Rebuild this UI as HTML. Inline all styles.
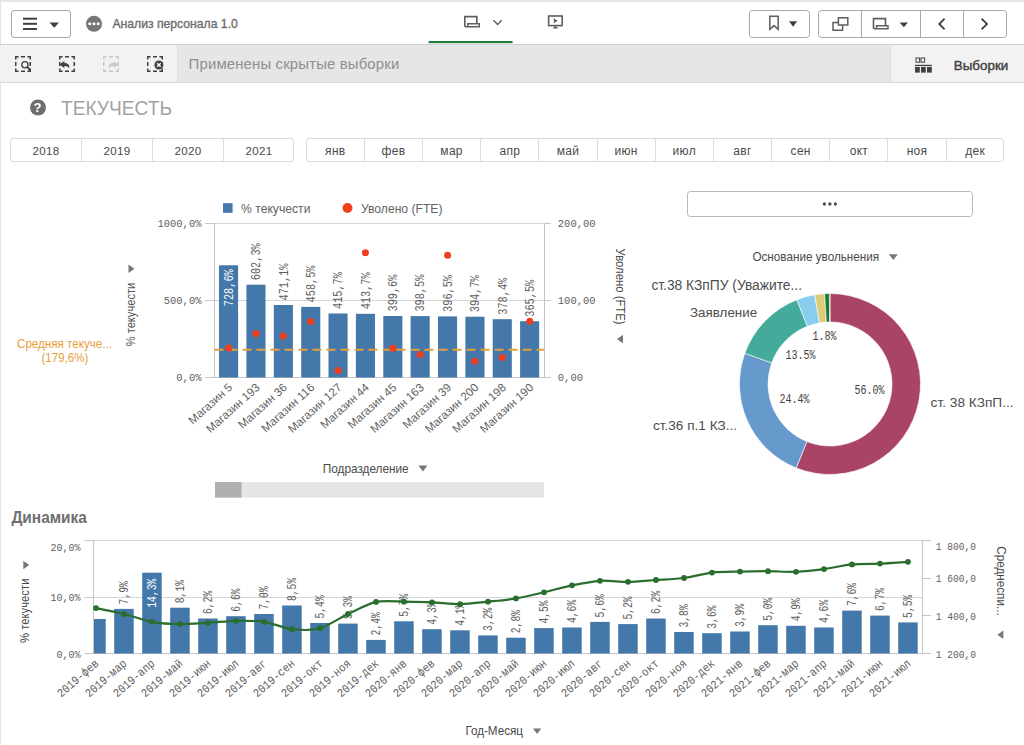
<!DOCTYPE html><html><head><meta charset="utf-8"><style>
*{margin:0;padding:0;box-sizing:border-box}
html,body{width:1024px;height:745px;overflow:hidden;background:#fff;font-family:"Liberation Sans", sans-serif;position:relative}
.abs{position:absolute}
.t{position:absolute;white-space:nowrap;line-height:1}

</style></head><body>
<div class="abs" style="left:0;top:0;width:1024px;height:2px;background:#e6e6e6"></div>
<div class="abs" style="left:0;top:0;width:1px;height:745px;background:#e3e3e3"></div>
<div class="abs" style="left:0;top:44px;width:1024px;height:1px;background:#d2d2d2"></div>
<div class="abs" style="left:0;top:45px;width:1024px;height:37px;background:#f2f2f2"></div>
<div class="abs" style="left:177px;top:45px;width:714px;height:37px;background:#e6e6e6;border-left:1px solid #dedede;border-right:1px solid #dedede"></div>
<div class="abs" style="left:0;top:82px;width:1024px;height:1px;background:#d9d9d9"></div>
<div class="abs" style="left:11px;top:10px;width:60px;height:28px;border:1px solid #a8a8a8;border-radius:3px"></div>
<svg class="abs" style="left:0;top:0" width="1024" height="745" viewBox="0 0 1024 745"><rect x="23" y="17.7" width="14" height="2" fill="#404040"/><rect x="23" y="22.8" width="14" height="2" fill="#404040"/><rect x="23" y="28" width="14" height="2" fill="#404040"/><path d="M49.5 22.4 L59 22.4 L54.25 27.8 Z" fill="#404040"/><circle cx="94" cy="23.8" r="8" fill="#757575"/><circle cx="89.8" cy="23.8" r="1.5" fill="#fff"/><circle cx="94" cy="23.8" r="1.5" fill="#fff"/><circle cx="98.2" cy="23.8" r="1.5" fill="#fff"/><path d="M464.8 26.799999999999997 L464.8 16.6 L476.8 16.6 L476.8 23.799999999999997" fill="none" stroke="#5e5e5e" stroke-width="1.6"/><path d="M464.8 26.799999999999997 L467.8 26.799999999999997 L467.8 23.799999999999997 L479.3 23.799999999999997 L479.3 26.799999999999997 Z" fill="none" stroke="#5e5e5e" stroke-width="1.4"/><path d="M493.5 20.2 L497.6 24.4 L501.7 20.2" fill="none" stroke="#5e5e5e" stroke-width="1.5"/><rect x="548.6" y="16" width="13.6" height="9.6" fill="none" stroke="#5e5e5e" stroke-width="1.6"/><path d="M553.8 18.3 L557.6 20.8 L553.8 23.3 Z" fill="#5e5e5e"/><path d="M555.4 25.8 L552.6 28.4 L558.2 28.4 Z" fill="#5e5e5e"/><rect x="428.6" y="41" width="84" height="2.2" fill="#1f7d3f"/><rect x="749.5" y="10.5" width="60" height="27" rx="3" fill="none" stroke="#a8a8a8" stroke-width="1"/><path d="M769.8 29.4 L769.8 16.2 L778.2 16.2 L778.2 29.4 L774 25.6 Z" fill="none" stroke="#5e5e5e" stroke-width="1.5" stroke-linejoin="miter"/><path d="M789 21.2 L797.2 21.2 L793.1 26.7 Z" fill="#404040"/><rect x="818.5" y="10.5" width="188" height="27" rx="3" fill="none" stroke="#a8a8a8" stroke-width="1"/><line x1="861.5" y1="10.5" x2="861.5" y2="37.5" stroke="#a8a8a8" stroke-width="1"/><line x1="920.5" y1="10.5" x2="920.5" y2="37.5" stroke="#a8a8a8" stroke-width="1"/><line x1="963.5" y1="10.5" x2="963.5" y2="37.5" stroke="#a8a8a8" stroke-width="1"/><rect x="838.4" y="17.8" width="9.4" height="7.2" fill="none" stroke="#5e5e5e" stroke-width="1.5"/><path d="M838.4 22.4 L833 22.4 L833 30.2 L842.6 30.2 L842.6 25" fill="none" stroke="#5e5e5e" stroke-width="1.5"/><path d="M873.5 28.8 L873.5 18.6 L885.5 18.6 L885.5 25.8" fill="none" stroke="#5e5e5e" stroke-width="1.6"/><path d="M873.5 28.8 L876.5 28.8 L876.5 25.8 L888.0 25.8 L888.0 28.8 Z" fill="none" stroke="#5e5e5e" stroke-width="1.4"/><path d="M899.7 22.4 L908 22.4 L903.85 27.2 Z" fill="#404040"/><path d="M944.6 18.6 L939.2 24 L944.6 29.4" fill="none" stroke="#404040" stroke-width="1.8"/><path d="M981.6 18.6 L987 24 L981.6 29.4" fill="none" stroke="#404040" stroke-width="1.8"/><path d="M15.75 59.6 V56.75 H18.6 M27.4 56.75 H30.25 V59.6 M30.25 68.4 V71.25 H27.4 M18.6 71.25 H15.75 V68.4 M21 56.75 H25 M21 71.25 H25 M15.75 62 V66 M30.25 62 V66" fill="none" stroke="#404040" stroke-width="1.5"/><circle cx="24.9" cy="64.7" r="3.1" fill="none" stroke="#404040" stroke-width="1.3"/><path d="M27.2 67 L30.4 70.3" stroke="#404040" stroke-width="1.9"/><path d="M59.75 59.6 V56.75 H62.6 M71.4 56.75 H74.25 V59.6 M74.25 68.4 V71.25 H71.4 M62.6 71.25 H59.75 V68.4 M65 56.75 H69 M65 71.25 H69 M59.75 62 V66 M74.25 62 V66" fill="none" stroke="#404040" stroke-width="1.5"/><path d="M59.4 64.4 L64.4 60.9 L64.4 62.9 C67.6 62.9 69.8 64.6 69.2 68.2 C68 66.6 66.6 66 64.4 66 L64.4 67.9 Z" fill="#404040"/><path d="M103.75 59.6 V56.75 H106.6 M115.4 56.75 H118.25 V59.6 M118.25 68.4 V71.25 H115.4 M106.6 71.25 H103.75 V68.4 M109 56.75 H113 M109 71.25 H113 M103.75 62 V66 M118.25 62 V66" fill="none" stroke="#c8c8c8" stroke-width="1.5"/><path d="M118.6 64.4 L113.6 60.9 L113.6 62.9 C110.4 62.9 108.2 64.6 108.8 68.2 C110 66.6 111.4 66 113.6 66 L113.6 67.9 Z" fill="#c8c8c8"/><path d="M147.75 59.6 V56.75 H150.6 M159.4 56.75 H162.25 V59.6 M162.25 68.4 V71.25 H159.4 M150.6 71.25 H147.75 V68.4 M153 56.75 H157 M153 71.25 H157 M147.75 62 V66 M162.25 62 V66" fill="none" stroke="#404040" stroke-width="1.5"/><circle cx="158.9" cy="65" r="4.5" fill="#404040"/><path d="M157.1 63.2 L160.7 66.8 M160.7 63.2 L157.1 66.8" stroke="#fff" stroke-width="1.3"/><rect x="916.0" y="58" width="3.6" height="4.2" fill="none" stroke="#404040" stroke-width="1"/><rect x="921.0" y="58" width="3.6" height="4.2" fill="none" stroke="#404040" stroke-width="1"/><rect x="915" y="64.8" width="16.8" height="1.3" fill="#404040"/><rect x="915" y="67" width="4.8" height="5.6" fill="#404040"/><rect x="921" y="67" width="4.8" height="5.6" fill="#404040"/><rect x="927" y="67" width="4.8" height="5.6" fill="#404040"/><circle cx="38" cy="107.5" r="8" fill="#6e6e6e"/></svg>
<div class="t" style="left:112.4px;top:18.4px;font-size:12.2px;color:#6e6e6e;-webkit-text-stroke:0.35px #6e6e6e">Анализ персонала 1.0</div>
<div class="t" style="left:188.6px;top:56.7px;font-size:14.9px;letter-spacing:0.16px;color:#8f8f8f">Применены скрытые выборки</div>
<div class="t" style="left:953.8px;top:58.6px;font-size:13.4px;color:#404040;-webkit-text-stroke:0.4px #404040">Выборки</div>
<div class="t" style="left:33.5px;top:100.5px;font-size:13px;font-weight:700;color:#fff">?</div>
<div class="t" style="left:61.2px;top:97.2px;font-size:21px;transform:scaleX(0.912);transform-origin:0 0;color:#a3a3a3">ТЕКУЧЕСТЬ</div>
<div class="abs" style="left:10px;top:138px;width:284px;height:24px;border:1px solid #dcdcdc;border-radius:3px"></div>
<div class="t" style="left:10.5px;width:71.0px;top:144.6px;text-align:center;font-size:11.6px;letter-spacing:0.3px;color:#4a4a4a">2018</div>
<div class="abs" style="left:81.0px;top:138px;width:1px;height:23.5px;background:#dcdcdc"></div>
<div class="t" style="left:81.5px;width:71.0px;top:144.6px;text-align:center;font-size:11.6px;letter-spacing:0.3px;color:#4a4a4a">2019</div>
<div class="abs" style="left:152.0px;top:138px;width:1px;height:23.5px;background:#dcdcdc"></div>
<div class="t" style="left:152.5px;width:71.0px;top:144.6px;text-align:center;font-size:11.6px;letter-spacing:0.3px;color:#4a4a4a">2020</div>
<div class="abs" style="left:223.0px;top:138px;width:1px;height:23.5px;background:#dcdcdc"></div>
<div class="t" style="left:223.5px;width:71.0px;top:144.6px;text-align:center;font-size:11.6px;letter-spacing:0.3px;color:#4a4a4a">2021</div>
<div class="abs" style="left:306px;top:138px;width:698px;height:24px;border:1px solid #dcdcdc;border-radius:3px"></div>
<div class="t" style="left:306.2px;width:58.2px;top:145.4px;text-align:center;font-size:12px;letter-spacing:0.3px;color:#4a4a4a">янв</div>
<div class="abs" style="left:363.9px;top:138px;width:1px;height:23.5px;background:#dcdcdc"></div>
<div class="t" style="left:364.4px;width:58.2px;top:145.4px;text-align:center;font-size:12px;letter-spacing:0.3px;color:#4a4a4a">фев</div>
<div class="abs" style="left:422.0px;top:138px;width:1px;height:23.5px;background:#dcdcdc"></div>
<div class="t" style="left:422.5px;width:58.2px;top:145.4px;text-align:center;font-size:12px;letter-spacing:0.3px;color:#4a4a4a">мар</div>
<div class="abs" style="left:480.2px;top:138px;width:1px;height:23.5px;background:#dcdcdc"></div>
<div class="t" style="left:480.7px;width:58.2px;top:145.4px;text-align:center;font-size:12px;letter-spacing:0.3px;color:#4a4a4a">апр</div>
<div class="abs" style="left:538.4px;top:138px;width:1px;height:23.5px;background:#dcdcdc"></div>
<div class="t" style="left:538.9px;width:58.2px;top:145.4px;text-align:center;font-size:12px;letter-spacing:0.3px;color:#4a4a4a">май</div>
<div class="abs" style="left:596.6px;top:138px;width:1px;height:23.5px;background:#dcdcdc"></div>
<div class="t" style="left:597.1px;width:58.2px;top:145.4px;text-align:center;font-size:12px;letter-spacing:0.3px;color:#4a4a4a">июн</div>
<div class="abs" style="left:654.8px;top:138px;width:1px;height:23.5px;background:#dcdcdc"></div>
<div class="t" style="left:655.2px;width:58.2px;top:145.4px;text-align:center;font-size:12px;letter-spacing:0.3px;color:#4a4a4a">июл</div>
<div class="abs" style="left:712.9px;top:138px;width:1px;height:23.5px;background:#dcdcdc"></div>
<div class="t" style="left:713.4px;width:58.2px;top:145.4px;text-align:center;font-size:12px;letter-spacing:0.3px;color:#4a4a4a">авг</div>
<div class="abs" style="left:771.1px;top:138px;width:1px;height:23.5px;background:#dcdcdc"></div>
<div class="t" style="left:771.6px;width:58.2px;top:145.4px;text-align:center;font-size:12px;letter-spacing:0.3px;color:#4a4a4a">сен</div>
<div class="abs" style="left:829.3px;top:138px;width:1px;height:23.5px;background:#dcdcdc"></div>
<div class="t" style="left:829.8px;width:58.2px;top:145.4px;text-align:center;font-size:12px;letter-spacing:0.3px;color:#4a4a4a">окт</div>
<div class="abs" style="left:887.4px;top:138px;width:1px;height:23.5px;background:#dcdcdc"></div>
<div class="t" style="left:887.9px;width:58.2px;top:145.4px;text-align:center;font-size:12px;letter-spacing:0.3px;color:#4a4a4a">ноя</div>
<div class="abs" style="left:945.6px;top:138px;width:1px;height:23.5px;background:#dcdcdc"></div>
<div class="t" style="left:946.1px;width:58.2px;top:145.4px;text-align:center;font-size:12px;letter-spacing:0.3px;color:#4a4a4a">дек</div>
<svg class="abs" style="left:0;top:0" width="1024" height="745" viewBox="0 0 1024 745"><line x1="214.5" y1="223.5" x2="544.5" y2="223.5" stroke="#d6d6d6" stroke-width="1"/><line x1="205" y1="223.5" x2="214.5" y2="223.5" stroke="#c6c6c6" stroke-width="1"/><line x1="544.5" y1="223.5" x2="551" y2="223.5" stroke="#c6c6c6" stroke-width="1"/><line x1="214.5" y1="300.5" x2="544.5" y2="300.5" stroke="#d6d6d6" stroke-width="1"/><line x1="205" y1="300.5" x2="214.5" y2="300.5" stroke="#c6c6c6" stroke-width="1"/><line x1="544.5" y1="300.5" x2="551" y2="300.5" stroke="#c6c6c6" stroke-width="1"/><line x1="205" y1="377.5" x2="551" y2="377.5" stroke="#c6c6c6" stroke-width="1"/><line x1="214.5" y1="223.5" x2="214.5" y2="377.5" stroke="#c6c6c6" stroke-width="1"/><line x1="544.5" y1="223.5" x2="544.5" y2="377.5" stroke="#c6c6c6" stroke-width="1"/><rect x="219.0" y="265.3" width="19.1" height="112.2" fill="#4477aa"/><rect x="246.4" y="284.7" width="19.1" height="92.8" fill="#4477aa"/><rect x="273.8" y="305.0" width="19.1" height="72.5" fill="#4477aa"/><rect x="301.2" y="306.9" width="19.1" height="70.6" fill="#4477aa"/><rect x="328.5" y="313.5" width="19.1" height="64.0" fill="#4477aa"/><rect x="355.9" y="313.8" width="19.1" height="63.7" fill="#4477aa"/><rect x="383.3" y="316.0" width="19.1" height="61.5" fill="#4477aa"/><rect x="410.6" y="316.1" width="19.1" height="61.4" fill="#4477aa"/><rect x="438.0" y="316.4" width="19.1" height="61.1" fill="#4477aa"/><rect x="465.4" y="316.7" width="19.1" height="60.8" fill="#4477aa"/><rect x="492.7" y="319.2" width="19.1" height="58.3" fill="#4477aa"/><rect x="520.1" y="321.2" width="19.1" height="56.3" fill="#4477aa"/><line x1="214.5" y1="349.8" x2="544.5" y2="349.8" stroke="#e3a03a" stroke-width="2" stroke-dasharray="9 5"/><text transform="translate(232.8,269.3) rotate(-90)" text-anchor="end" font-family="Liberation Mono" font-size="12.9" textLength="36.9" lengthAdjust="spacingAndGlyphs" fill="#ffffff" >728,6%</text><text transform="translate(260.2,280.2) rotate(-90)" text-anchor="start" font-family="Liberation Mono" font-size="12.9" textLength="36.9" lengthAdjust="spacingAndGlyphs" fill="#5e5e5e" >602,3%</text><text transform="translate(287.5,300.5) rotate(-90)" text-anchor="start" font-family="Liberation Mono" font-size="12.9" textLength="36.9" lengthAdjust="spacingAndGlyphs" fill="#5e5e5e" >471,1%</text><text transform="translate(314.9,302.4) rotate(-90)" text-anchor="start" font-family="Liberation Mono" font-size="12.9" textLength="36.9" lengthAdjust="spacingAndGlyphs" fill="#5e5e5e" >458,5%</text><text transform="translate(342.3,309.0) rotate(-90)" text-anchor="start" font-family="Liberation Mono" font-size="12.9" textLength="36.9" lengthAdjust="spacingAndGlyphs" fill="#5e5e5e" >415,7%</text><text transform="translate(369.6,309.3) rotate(-90)" text-anchor="start" font-family="Liberation Mono" font-size="12.9" textLength="36.9" lengthAdjust="spacingAndGlyphs" fill="#5e5e5e" >413,7%</text><text transform="translate(397.0,311.5) rotate(-90)" text-anchor="start" font-family="Liberation Mono" font-size="12.9" textLength="36.9" lengthAdjust="spacingAndGlyphs" fill="#5e5e5e" >399,6%</text><text transform="translate(424.4,311.6) rotate(-90)" text-anchor="start" font-family="Liberation Mono" font-size="12.9" textLength="36.9" lengthAdjust="spacingAndGlyphs" fill="#5e5e5e" >398,5%</text><text transform="translate(451.8,311.9) rotate(-90)" text-anchor="start" font-family="Liberation Mono" font-size="12.9" textLength="36.9" lengthAdjust="spacingAndGlyphs" fill="#5e5e5e" >396,5%</text><text transform="translate(479.1,312.2) rotate(-90)" text-anchor="start" font-family="Liberation Mono" font-size="12.9" textLength="36.9" lengthAdjust="spacingAndGlyphs" fill="#5e5e5e" >394,7%</text><text transform="translate(506.5,314.7) rotate(-90)" text-anchor="start" font-family="Liberation Mono" font-size="12.9" textLength="36.9" lengthAdjust="spacingAndGlyphs" fill="#5e5e5e" >378,4%</text><text transform="translate(533.9,316.7) rotate(-90)" text-anchor="start" font-family="Liberation Mono" font-size="12.9" textLength="36.9" lengthAdjust="spacingAndGlyphs" fill="#5e5e5e" >365,5%</text><circle cx="228.6" cy="348.0" r="3.5" fill="#ef3f1e"/><circle cx="256.0" cy="333.6" r="3.5" fill="#ef3f1e"/><circle cx="283.3" cy="335.9" r="3.5" fill="#ef3f1e"/><circle cx="310.7" cy="321.6" r="3.5" fill="#ef3f1e"/><circle cx="338.1" cy="370.6" r="3.5" fill="#ef3f1e"/><circle cx="365.4" cy="252.8" r="3.5" fill="#ef3f1e"/><circle cx="392.8" cy="348.2" r="3.5" fill="#ef3f1e"/><circle cx="420.2" cy="354.4" r="3.5" fill="#ef3f1e"/><circle cx="447.6" cy="255.3" r="3.5" fill="#ef3f1e"/><circle cx="474.9" cy="361.3" r="3.5" fill="#ef3f1e"/><circle cx="502.3" cy="357.5" r="3.5" fill="#ef3f1e"/><circle cx="529.7" cy="321.3" r="3.5" fill="#ef3f1e"/><text x="201.5" y="226.5" text-anchor="end" font-family="Liberation Mono" font-size="11.6" textLength="44.1" lengthAdjust="spacingAndGlyphs" fill="#5e5e5e" >1000,0%</text><text x="201.5" y="303.5" text-anchor="end" font-family="Liberation Mono" font-size="11.6" textLength="37.8" lengthAdjust="spacingAndGlyphs" fill="#5e5e5e" >500,0%</text><text x="201.5" y="380.5" text-anchor="end" font-family="Liberation Mono" font-size="11.6" textLength="25.2" lengthAdjust="spacingAndGlyphs" fill="#5e5e5e" >0,0%</text><text x="557.8" y="226.5" text-anchor="start" font-family="Liberation Mono" font-size="11.6" textLength="37.8" lengthAdjust="spacingAndGlyphs" fill="#5e5e5e" >200,00</text><text x="557.8" y="303.5" text-anchor="start" font-family="Liberation Mono" font-size="11.6" textLength="37.8" lengthAdjust="spacingAndGlyphs" fill="#5e5e5e" >100,00</text><text x="557.8" y="380.5" text-anchor="start" font-family="Liberation Mono" font-size="11.6" textLength="25.2" lengthAdjust="spacingAndGlyphs" fill="#5e5e5e" >0,00</text><text transform="translate(233.1,388.5) rotate(-42)" text-anchor="end" font-family='Liberation Sans' font-size="11.6" fill="#5e5e5e">Магазин 5</text><text transform="translate(260.5,388.5) rotate(-42)" text-anchor="end" font-family='Liberation Sans' font-size="11.6" fill="#5e5e5e">Магазин 193</text><text transform="translate(287.8,388.5) rotate(-42)" text-anchor="end" font-family='Liberation Sans' font-size="11.6" fill="#5e5e5e">Магазин 36</text><text transform="translate(315.2,388.5) rotate(-42)" text-anchor="end" font-family='Liberation Sans' font-size="11.6" fill="#5e5e5e">Магазин 116</text><text transform="translate(342.6,388.5) rotate(-42)" text-anchor="end" font-family='Liberation Sans' font-size="11.6" fill="#5e5e5e">Магазин 127</text><text transform="translate(369.9,388.5) rotate(-42)" text-anchor="end" font-family='Liberation Sans' font-size="11.6" fill="#5e5e5e">Магазин 44</text><text transform="translate(397.3,388.5) rotate(-42)" text-anchor="end" font-family='Liberation Sans' font-size="11.6" fill="#5e5e5e">Магазин 45</text><text transform="translate(424.7,388.5) rotate(-42)" text-anchor="end" font-family='Liberation Sans' font-size="11.6" fill="#5e5e5e">Магазин 163</text><text transform="translate(452.1,388.5) rotate(-42)" text-anchor="end" font-family='Liberation Sans' font-size="11.6" fill="#5e5e5e">Магазин 39</text><text transform="translate(479.4,388.5) rotate(-42)" text-anchor="end" font-family='Liberation Sans' font-size="11.6" fill="#5e5e5e">Магазин 200</text><text transform="translate(506.8,388.5) rotate(-42)" text-anchor="end" font-family='Liberation Sans' font-size="11.6" fill="#5e5e5e">Магазин 198</text><text transform="translate(534.2,388.5) rotate(-42)" text-anchor="end" font-family='Liberation Sans' font-size="11.6" fill="#5e5e5e">Магазин 190</text><rect x="223" y="203.2" width="9.6" height="9.6" fill="#4477aa"/><text x="241" y="212.6" font-family='Liberation Sans' font-size="12.6" textLength="69.5" lengthAdjust="spacingAndGlyphs" fill="#626262">% текучести</text><circle cx="347.5" cy="208" r="5" fill="#ef3f1e"/><text x="361" y="212.6" font-family='Liberation Sans' font-size="12.6" textLength="81.5" lengthAdjust="spacingAndGlyphs" fill="#626262">Уволено (FTE)</text><text transform="translate(134.8,314.5) rotate(-90)" text-anchor="middle" font-family='Liberation Sans' font-size="12" textLength="63.5" lengthAdjust="spacingAndGlyphs" fill="#555">% текучести</text><path d="M128.5 264.5 L134.5 268.8 L128.5 273.1 Z" fill="#777"/><text transform="translate(615.8,286.6) rotate(90)" text-anchor="middle" font-family='Liberation Sans' font-size="12.2" textLength="76" lengthAdjust="spacingAndGlyphs" fill="#4a4a4a">Уволено (FTE)</text><path d="M623 334.7 L617 339 L623 343.3 Z" fill="#777"/><text x="64.5" y="348" text-anchor="middle" font-family='Liberation Sans' font-size="12.4" textLength="95" lengthAdjust="spacingAndGlyphs" fill="#e6a03a">Средняя текуче...</text><text x="64.9" y="362" text-anchor="middle" font-family='Liberation Sans' font-size="12.4" textLength="47" lengthAdjust="spacingAndGlyphs" fill="#e6a03a">(179,6%)</text><text x="322.8" y="472.8" font-family='Liberation Sans' font-size="12.8" textLength="85.8" lengthAdjust="spacingAndGlyphs" fill="#4a4a4a">Подразделение</text><path d="M418.4 465.6 L427.4 465.6 L422.9 471.4 Z" fill="#777"/><rect x="215" y="482" width="329" height="15.6" fill="#e6e6e6"/><rect x="215" y="482" width="26.6" height="15.6" fill="#b0b0b0"/><path d="M830.00 293.50 A90.5 90.5 0 1 1 796.24 467.97 L806.87 441.52 A62 62 0 1 0 830.00 322.00 Z" fill="#aa4466" stroke="#fff" stroke-width="0.6"/><path d="M796.24 467.97 A90.5 90.5 0 0 1 744.89 353.23 L771.69 362.92 A62 62 0 0 0 806.87 441.52 Z" fill="#6699cc" stroke="#fff" stroke-width="0.6"/><path d="M744.89 353.23 A90.5 90.5 0 0 1 796.90 299.77 L807.33 326.30 A62 62 0 0 0 771.69 362.92 Z" fill="#44aa99" stroke="#fff" stroke-width="0.6"/><path d="M796.90 299.77 A90.5 90.5 0 0 1 814.70 294.80 L819.52 322.89 A62 62 0 0 0 807.33 326.30 Z" fill="#88ccee" stroke="#fff" stroke-width="0.6"/><path d="M814.70 294.80 A90.5 90.5 0 0 1 824.59 293.66 L826.30 322.11 A62 62 0 0 0 819.52 322.89 Z" fill="#ddcc77" stroke="#fff" stroke-width="0.6"/><path d="M824.59 293.66 A90.5 90.5 0 0 1 829.43 293.50 L829.61 322.00 A62 62 0 0 0 826.30 322.11 Z" fill="#1c7a33" stroke="#fff" stroke-width="0.6"/><path d="M829.43 293.50 A90.5 90.5 0 0 1 830.00 293.50 L830.00 322.00 A62 62 0 0 0 829.61 322.00 Z" fill="#333" stroke="#fff" stroke-width="0.6"/><text x="869.5" y="394.3" text-anchor="middle" font-family="Liberation Mono" font-size="12" textLength="30" lengthAdjust="spacingAndGlyphs" fill="#404040">56.0%</text><text x="794.6" y="402.5" text-anchor="middle" font-family="Liberation Mono" font-size="12" textLength="30" lengthAdjust="spacingAndGlyphs" fill="#404040">24.4%</text><text x="800.5" y="359" text-anchor="middle" font-family="Liberation Mono" font-size="12" textLength="30" lengthAdjust="spacingAndGlyphs" fill="#404040">13.5%</text><text x="824.5" y="340" text-anchor="middle" font-family="Liberation Mono" font-size="12" textLength="24" lengthAdjust="spacingAndGlyphs" fill="#404040">1.8%</text><text x="651.4" y="289.5" font-family='Liberation Sans' font-size="13.8" fill="#4d4d4d">ст.38 КЗпПУ (Уважите...</text><text x="690" y="316.8" font-family='Liberation Sans' font-size="13.4" fill="#4d4d4d">Заявление</text><text x="930.6" y="407" font-family='Liberation Sans' font-size="13.7" fill="#4d4d4d">ст. 38 КЗпП...</text><text x="653" y="430.2" font-family='Liberation Sans' font-size="13.6" fill="#4d4d4d">ст.36 п.1 КЗ...</text><text x="752.4" y="261.4" font-family='Liberation Sans' font-size="12.8" textLength="126.8" lengthAdjust="spacingAndGlyphs" fill="#4a4a4a">Основание увольнения</text><path d="M888.8 254.2 L897.8 254.2 L893.3 260 Z" fill="#777"/><rect x="687.5" y="191.5" width="285" height="25" rx="3" fill="#fff" stroke="#b8b8b8" stroke-width="1"/><circle cx="824.4" cy="204" r="1.65" fill="#4f4f4f"/><circle cx="829.9" cy="204" r="1.65" fill="#4f4f4f"/><circle cx="835.4" cy="204" r="1.65" fill="#4f4f4f"/><text x="11.4" y="522.8" font-family='Liberation Sans' font-size="16.4" font-weight="700" textLength="75.5" lengthAdjust="spacingAndGlyphs" fill="#6e6e6e">Динамика</text><line x1="93.5" y1="540.5" x2="922.5" y2="540.5" stroke="#d6d6d6" stroke-width="1"/><line x1="84.5" y1="540.5" x2="93.5" y2="540.5" stroke="#c6c6c6" stroke-width="1"/><line x1="93.5" y1="597.5" x2="922.5" y2="597.5" stroke="#d6d6d6" stroke-width="1"/><line x1="84.5" y1="597.5" x2="93.5" y2="597.5" stroke="#c6c6c6" stroke-width="1"/><line x1="84.5" y1="653.5" x2="931" y2="653.5" stroke="#c6c6c6" stroke-width="1"/><line x1="93.5" y1="540.5" x2="93.5" y2="653.5" stroke="#c6c6c6" stroke-width="1"/><line x1="922.5" y1="540.5" x2="922.5" y2="653.5" stroke="#c6c6c6" stroke-width="1"/><line x1="922.5" y1="540.5" x2="931" y2="540.5" stroke="#c6c6c6" stroke-width="1"/><text x="935.7" y="550.1" text-anchor="start" font-family="Liberation Mono" font-size="11.2" textLength="40.3" lengthAdjust="spacingAndGlyphs" fill="#5e5e5e" >1 800,0</text><line x1="922.5" y1="578.5" x2="931" y2="578.5" stroke="#c6c6c6" stroke-width="1"/><text x="935.7" y="582.2" text-anchor="start" font-family="Liberation Mono" font-size="11.2" textLength="40.3" lengthAdjust="spacingAndGlyphs" fill="#5e5e5e" >1 600,0</text><line x1="922.5" y1="615.5" x2="931" y2="615.5" stroke="#c6c6c6" stroke-width="1"/><text x="935.7" y="619.8" text-anchor="start" font-family="Liberation Mono" font-size="11.2" textLength="40.3" lengthAdjust="spacingAndGlyphs" fill="#5e5e5e" >1 400,0</text><line x1="922.5" y1="653.5" x2="931" y2="653.5" stroke="#c6c6c6" stroke-width="1"/><text x="935.7" y="657.5" text-anchor="start" font-family="Liberation Mono" font-size="11.2" textLength="40.3" lengthAdjust="spacingAndGlyphs" fill="#5e5e5e" >1 200,0</text><text x="80.5" y="550.7" text-anchor="end" font-family="Liberation Mono" font-size="11.2" textLength="30.0" lengthAdjust="spacingAndGlyphs" fill="#5e5e5e" >20,0%</text><text x="80.5" y="601.0" text-anchor="end" font-family="Liberation Mono" font-size="11.2" textLength="30.0" lengthAdjust="spacingAndGlyphs" fill="#5e5e5e" >10,0%</text><text x="80.5" y="657.5" text-anchor="end" font-family="Liberation Mono" font-size="11.2" textLength="24.0" lengthAdjust="spacingAndGlyphs" fill="#5e5e5e" >0,0%</text><clipPath id="bclip"><rect x="93.9" y="530" width="828.2" height="124"/></clipPath><g clip-path="url(#bclip)"><rect x="86.2" y="619.0" width="19.5" height="34.5" fill="#4477aa"/><rect x="114.2" y="608.9" width="19.5" height="44.6" fill="#4477aa"/><rect x="142.2" y="572.7" width="19.5" height="80.8" fill="#4477aa"/><rect x="170.2" y="607.7" width="19.5" height="45.8" fill="#4477aa"/><rect x="198.2" y="618.5" width="19.5" height="35.0" fill="#4477aa"/><rect x="226.2" y="616.2" width="19.5" height="37.3" fill="#4477aa"/><rect x="254.2" y="614.0" width="19.5" height="39.5" fill="#4477aa"/><rect x="282.2" y="605.5" width="19.5" height="48.0" fill="#4477aa"/><rect x="310.2" y="623.0" width="19.5" height="30.5" fill="#4477aa"/><rect x="338.2" y="623.6" width="19.5" height="29.9" fill="#4477aa"/><rect x="366.2" y="639.9" width="19.5" height="13.6" fill="#4477aa"/><rect x="394.2" y="621.3" width="19.5" height="32.2" fill="#4477aa"/><rect x="422.2" y="629.2" width="19.5" height="24.3" fill="#4477aa"/><rect x="450.2" y="630.3" width="19.5" height="23.2" fill="#4477aa"/><rect x="478.2" y="635.4" width="19.5" height="18.1" fill="#4477aa"/><rect x="506.2" y="637.7" width="19.5" height="15.8" fill="#4477aa"/><rect x="534.2" y="628.1" width="19.5" height="25.4" fill="#4477aa"/><rect x="562.2" y="627.5" width="19.5" height="26.0" fill="#4477aa"/><rect x="590.2" y="621.9" width="19.5" height="31.6" fill="#4477aa"/><rect x="618.2" y="624.1" width="19.5" height="29.4" fill="#4477aa"/><rect x="646.2" y="618.5" width="19.5" height="35.0" fill="#4477aa"/><rect x="674.2" y="632.0" width="19.5" height="21.5" fill="#4477aa"/><rect x="702.2" y="633.2" width="19.5" height="20.3" fill="#4477aa"/><rect x="730.2" y="631.5" width="19.5" height="22.0" fill="#4477aa"/><rect x="758.2" y="625.2" width="19.5" height="28.2" fill="#4477aa"/><rect x="786.2" y="625.8" width="19.5" height="27.7" fill="#4477aa"/><rect x="814.2" y="627.5" width="19.5" height="26.0" fill="#4477aa"/><rect x="842.2" y="610.6" width="19.5" height="42.9" fill="#4477aa"/><rect x="870.2" y="615.6" width="19.5" height="37.9" fill="#4477aa"/><rect x="898.2" y="622.4" width="19.5" height="31.1" fill="#4477aa"/></g><text transform="translate(128.3,604.4) rotate(-90)" text-anchor="start" font-family="Liberation Mono" font-size="12.4" textLength="23.2" lengthAdjust="spacingAndGlyphs" fill="#5e5e5e" >7,9%</text><text transform="translate(156.3,578.7) rotate(-90)" text-anchor="end" font-family="Liberation Mono" font-size="12.4" textLength="29.0" lengthAdjust="spacingAndGlyphs" fill="#ffffff" >14,3%</text><text transform="translate(184.3,603.2) rotate(-90)" text-anchor="start" font-family="Liberation Mono" font-size="12.4" textLength="23.2" lengthAdjust="spacingAndGlyphs" fill="#5e5e5e" >8,1%</text><text transform="translate(212.3,614.0) rotate(-90)" text-anchor="start" font-family="Liberation Mono" font-size="12.4" textLength="23.2" lengthAdjust="spacingAndGlyphs" fill="#5e5e5e" >6,2%</text><text transform="translate(240.3,611.7) rotate(-90)" text-anchor="start" font-family="Liberation Mono" font-size="12.4" textLength="23.2" lengthAdjust="spacingAndGlyphs" fill="#5e5e5e" >6,6%</text><text transform="translate(268.3,609.5) rotate(-90)" text-anchor="start" font-family="Liberation Mono" font-size="12.4" textLength="23.2" lengthAdjust="spacingAndGlyphs" fill="#5e5e5e" >7,0%</text><text transform="translate(296.3,601.0) rotate(-90)" text-anchor="start" font-family="Liberation Mono" font-size="12.4" textLength="23.2" lengthAdjust="spacingAndGlyphs" fill="#5e5e5e" >8,5%</text><text transform="translate(324.3,618.5) rotate(-90)" text-anchor="start" font-family="Liberation Mono" font-size="12.4" textLength="23.2" lengthAdjust="spacingAndGlyphs" fill="#5e5e5e" >5,4%</text><text transform="translate(352.3,619.1) rotate(-90)" text-anchor="start" font-family="Liberation Mono" font-size="12.4" textLength="23.2" lengthAdjust="spacingAndGlyphs" fill="#5e5e5e" >5,3%</text><text transform="translate(380.3,635.4) rotate(-90)" text-anchor="start" font-family="Liberation Mono" font-size="12.4" textLength="23.2" lengthAdjust="spacingAndGlyphs" fill="#5e5e5e" >2,4%</text><text transform="translate(408.3,616.8) rotate(-90)" text-anchor="start" font-family="Liberation Mono" font-size="12.4" textLength="23.2" lengthAdjust="spacingAndGlyphs" fill="#5e5e5e" >5,7%</text><text transform="translate(436.3,624.7) rotate(-90)" text-anchor="start" font-family="Liberation Mono" font-size="12.4" textLength="23.2" lengthAdjust="spacingAndGlyphs" fill="#5e5e5e" >4,3%</text><text transform="translate(464.3,625.8) rotate(-90)" text-anchor="start" font-family="Liberation Mono" font-size="12.4" textLength="23.2" lengthAdjust="spacingAndGlyphs" fill="#5e5e5e" >4,1%</text><text transform="translate(492.3,630.9) rotate(-90)" text-anchor="start" font-family="Liberation Mono" font-size="12.4" textLength="23.2" lengthAdjust="spacingAndGlyphs" fill="#5e5e5e" >3,2%</text><text transform="translate(520.3,633.2) rotate(-90)" text-anchor="start" font-family="Liberation Mono" font-size="12.4" textLength="23.2" lengthAdjust="spacingAndGlyphs" fill="#5e5e5e" >2,8%</text><text transform="translate(548.3,623.6) rotate(-90)" text-anchor="start" font-family="Liberation Mono" font-size="12.4" textLength="23.2" lengthAdjust="spacingAndGlyphs" fill="#5e5e5e" >4,5%</text><text transform="translate(576.3,623.0) rotate(-90)" text-anchor="start" font-family="Liberation Mono" font-size="12.4" textLength="23.2" lengthAdjust="spacingAndGlyphs" fill="#5e5e5e" >4,6%</text><text transform="translate(604.3,617.4) rotate(-90)" text-anchor="start" font-family="Liberation Mono" font-size="12.4" textLength="23.2" lengthAdjust="spacingAndGlyphs" fill="#5e5e5e" >5,6%</text><text transform="translate(632.3,619.6) rotate(-90)" text-anchor="start" font-family="Liberation Mono" font-size="12.4" textLength="23.2" lengthAdjust="spacingAndGlyphs" fill="#5e5e5e" >5,2%</text><text transform="translate(660.3,614.0) rotate(-90)" text-anchor="start" font-family="Liberation Mono" font-size="12.4" textLength="23.2" lengthAdjust="spacingAndGlyphs" fill="#5e5e5e" >6,2%</text><text transform="translate(688.3,627.5) rotate(-90)" text-anchor="start" font-family="Liberation Mono" font-size="12.4" textLength="23.2" lengthAdjust="spacingAndGlyphs" fill="#5e5e5e" >3,8%</text><text transform="translate(716.3,628.7) rotate(-90)" text-anchor="start" font-family="Liberation Mono" font-size="12.4" textLength="23.2" lengthAdjust="spacingAndGlyphs" fill="#5e5e5e" >3,6%</text><text transform="translate(744.3,627.0) rotate(-90)" text-anchor="start" font-family="Liberation Mono" font-size="12.4" textLength="23.2" lengthAdjust="spacingAndGlyphs" fill="#5e5e5e" >3,9%</text><text transform="translate(772.3,620.8) rotate(-90)" text-anchor="start" font-family="Liberation Mono" font-size="12.4" textLength="23.2" lengthAdjust="spacingAndGlyphs" fill="#5e5e5e" >5,0%</text><text transform="translate(800.3,621.3) rotate(-90)" text-anchor="start" font-family="Liberation Mono" font-size="12.4" textLength="23.2" lengthAdjust="spacingAndGlyphs" fill="#5e5e5e" >4,9%</text><text transform="translate(828.3,623.0) rotate(-90)" text-anchor="start" font-family="Liberation Mono" font-size="12.4" textLength="23.2" lengthAdjust="spacingAndGlyphs" fill="#5e5e5e" >4,6%</text><text transform="translate(856.3,606.1) rotate(-90)" text-anchor="start" font-family="Liberation Mono" font-size="12.4" textLength="23.2" lengthAdjust="spacingAndGlyphs" fill="#5e5e5e" >7,6%</text><text transform="translate(884.3,611.1) rotate(-90)" text-anchor="start" font-family="Liberation Mono" font-size="12.4" textLength="23.2" lengthAdjust="spacingAndGlyphs" fill="#5e5e5e" >6,7%</text><text transform="translate(912.3,617.9) rotate(-90)" text-anchor="start" font-family="Liberation Mono" font-size="12.4" textLength="23.2" lengthAdjust="spacingAndGlyphs" fill="#5e5e5e" >5,5%</text><path d="M96 608.1 C99.7 608.9 116.5 612.2 124 614 C131.5 615.8 144.5 620.5 152 621.8 C159.5 623.1 172.5 624.0 180 624.1 C187.5 624.2 200.5 623.2 208 622.8 C215.5 622.4 228.5 620.9 236 620.8 C243.5 620.7 256.5 620.7 264 621.8 C271.5 622.9 284.5 628.3 292 629.2 C299.5 630.1 312.5 630.2 320 628.2 C327.5 626.2 340.5 617.5 348 614 C355.5 610.5 368.5 603.5 376 601.9 C383.5 600.3 396.5 601.6 404 601.7 C411.5 601.8 424.5 602.0 432 602.3 C439.5 602.6 452.5 604.3 460 604.2 C467.5 604.1 480.5 602.5 488 601.7 C495.5 600.9 508.5 599.7 516 598.4 C523.5 597.1 536.5 594.0 544 592.3 C551.5 590.6 564.5 586.8 572 585.3 C579.5 583.8 592.5 581.3 600 580.8 C607.5 580.3 620.5 581.9 628 581.8 C635.5 581.7 648.5 580.5 656 580 C663.5 579.5 676.5 579.0 684 578 C691.5 577.0 704.5 573.5 712 572.6 C719.5 571.7 732.5 571.8 740 571.6 C747.5 571.4 760.5 571.2 768 571.2 C775.5 571.2 788.5 572.1 796 571.8 C803.5 571.5 816.5 570.1 824 569.1 C831.5 568.1 844.5 565.1 852 564.4 C859.5 563.7 872.5 563.9 880 563.6 C887.5 563.3 904.3 562.0 908 561.8" fill="none" stroke="#2a6e2e" stroke-width="2.2"/><circle cx="96" cy="608.1" r="2.9" fill="#2a6e2e"/><circle cx="124" cy="614" r="2.9" fill="#2a6e2e"/><circle cx="152" cy="621.8" r="2.9" fill="#2a6e2e"/><circle cx="180" cy="624.1" r="2.9" fill="#2a6e2e"/><circle cx="208" cy="622.8" r="2.9" fill="#2a6e2e"/><circle cx="236" cy="620.8" r="2.9" fill="#2a6e2e"/><circle cx="264" cy="621.8" r="2.9" fill="#2a6e2e"/><circle cx="292" cy="629.2" r="2.9" fill="#2a6e2e"/><circle cx="320" cy="628.2" r="2.9" fill="#2a6e2e"/><circle cx="348" cy="614" r="2.9" fill="#2a6e2e"/><circle cx="376" cy="601.9" r="2.9" fill="#2a6e2e"/><circle cx="404" cy="601.7" r="2.9" fill="#2a6e2e"/><circle cx="432" cy="602.3" r="2.9" fill="#2a6e2e"/><circle cx="460" cy="604.2" r="2.9" fill="#2a6e2e"/><circle cx="488" cy="601.7" r="2.9" fill="#2a6e2e"/><circle cx="516" cy="598.4" r="2.9" fill="#2a6e2e"/><circle cx="544" cy="592.3" r="2.9" fill="#2a6e2e"/><circle cx="572" cy="585.3" r="2.9" fill="#2a6e2e"/><circle cx="600" cy="580.8" r="2.9" fill="#2a6e2e"/><circle cx="628" cy="581.8" r="2.9" fill="#2a6e2e"/><circle cx="656" cy="580" r="2.9" fill="#2a6e2e"/><circle cx="684" cy="578" r="2.9" fill="#2a6e2e"/><circle cx="712" cy="572.6" r="2.9" fill="#2a6e2e"/><circle cx="740" cy="571.6" r="2.9" fill="#2a6e2e"/><circle cx="768" cy="571.2" r="2.9" fill="#2a6e2e"/><circle cx="796" cy="571.8" r="2.9" fill="#2a6e2e"/><circle cx="824" cy="569.1" r="2.9" fill="#2a6e2e"/><circle cx="852" cy="564.4" r="2.9" fill="#2a6e2e"/><circle cx="880" cy="563.6" r="2.9" fill="#2a6e2e"/><circle cx="908" cy="561.8" r="2.9" fill="#2a6e2e"/><text transform="translate(99.5,664.5) rotate(-41)" text-anchor="end" font-family="Liberation Mono" font-size="12" textLength="50.8" lengthAdjust="spacingAndGlyphs" fill="#5e5e5e" >2019-фев</text><text transform="translate(127.5,664.5) rotate(-41)" text-anchor="end" font-family="Liberation Mono" font-size="12" textLength="50.8" lengthAdjust="spacingAndGlyphs" fill="#5e5e5e" >2019-мар</text><text transform="translate(155.5,664.5) rotate(-41)" text-anchor="end" font-family="Liberation Mono" font-size="12" textLength="50.8" lengthAdjust="spacingAndGlyphs" fill="#5e5e5e" >2019-апр</text><text transform="translate(183.5,664.5) rotate(-41)" text-anchor="end" font-family="Liberation Mono" font-size="12" textLength="50.8" lengthAdjust="spacingAndGlyphs" fill="#5e5e5e" >2019-май</text><text transform="translate(211.5,664.5) rotate(-41)" text-anchor="end" font-family="Liberation Mono" font-size="12" textLength="50.8" lengthAdjust="spacingAndGlyphs" fill="#5e5e5e" >2019-июн</text><text transform="translate(239.5,664.5) rotate(-41)" text-anchor="end" font-family="Liberation Mono" font-size="12" textLength="50.8" lengthAdjust="spacingAndGlyphs" fill="#5e5e5e" >2019-июл</text><text transform="translate(267.5,664.5) rotate(-41)" text-anchor="end" font-family="Liberation Mono" font-size="12" textLength="50.8" lengthAdjust="spacingAndGlyphs" fill="#5e5e5e" >2019-авг</text><text transform="translate(295.5,664.5) rotate(-41)" text-anchor="end" font-family="Liberation Mono" font-size="12" textLength="50.8" lengthAdjust="spacingAndGlyphs" fill="#5e5e5e" >2019-сен</text><text transform="translate(323.5,664.5) rotate(-41)" text-anchor="end" font-family="Liberation Mono" font-size="12" textLength="50.8" lengthAdjust="spacingAndGlyphs" fill="#5e5e5e" >2019-окт</text><text transform="translate(351.5,664.5) rotate(-41)" text-anchor="end" font-family="Liberation Mono" font-size="12" textLength="50.8" lengthAdjust="spacingAndGlyphs" fill="#5e5e5e" >2019-ноя</text><text transform="translate(379.5,664.5) rotate(-41)" text-anchor="end" font-family="Liberation Mono" font-size="12" textLength="50.8" lengthAdjust="spacingAndGlyphs" fill="#5e5e5e" >2019-дек</text><text transform="translate(407.5,664.5) rotate(-41)" text-anchor="end" font-family="Liberation Mono" font-size="12" textLength="50.8" lengthAdjust="spacingAndGlyphs" fill="#5e5e5e" >2020-янв</text><text transform="translate(435.5,664.5) rotate(-41)" text-anchor="end" font-family="Liberation Mono" font-size="12" textLength="50.8" lengthAdjust="spacingAndGlyphs" fill="#5e5e5e" >2020-фев</text><text transform="translate(463.5,664.5) rotate(-41)" text-anchor="end" font-family="Liberation Mono" font-size="12" textLength="50.8" lengthAdjust="spacingAndGlyphs" fill="#5e5e5e" >2020-мар</text><text transform="translate(491.5,664.5) rotate(-41)" text-anchor="end" font-family="Liberation Mono" font-size="12" textLength="50.8" lengthAdjust="spacingAndGlyphs" fill="#5e5e5e" >2020-апр</text><text transform="translate(519.5,664.5) rotate(-41)" text-anchor="end" font-family="Liberation Mono" font-size="12" textLength="50.8" lengthAdjust="spacingAndGlyphs" fill="#5e5e5e" >2020-май</text><text transform="translate(547.5,664.5) rotate(-41)" text-anchor="end" font-family="Liberation Mono" font-size="12" textLength="50.8" lengthAdjust="spacingAndGlyphs" fill="#5e5e5e" >2020-июн</text><text transform="translate(575.5,664.5) rotate(-41)" text-anchor="end" font-family="Liberation Mono" font-size="12" textLength="50.8" lengthAdjust="spacingAndGlyphs" fill="#5e5e5e" >2020-июл</text><text transform="translate(603.5,664.5) rotate(-41)" text-anchor="end" font-family="Liberation Mono" font-size="12" textLength="50.8" lengthAdjust="spacingAndGlyphs" fill="#5e5e5e" >2020-авг</text><text transform="translate(631.5,664.5) rotate(-41)" text-anchor="end" font-family="Liberation Mono" font-size="12" textLength="50.8" lengthAdjust="spacingAndGlyphs" fill="#5e5e5e" >2020-сен</text><text transform="translate(659.5,664.5) rotate(-41)" text-anchor="end" font-family="Liberation Mono" font-size="12" textLength="50.8" lengthAdjust="spacingAndGlyphs" fill="#5e5e5e" >2020-окт</text><text transform="translate(687.5,664.5) rotate(-41)" text-anchor="end" font-family="Liberation Mono" font-size="12" textLength="50.8" lengthAdjust="spacingAndGlyphs" fill="#5e5e5e" >2020-ноя</text><text transform="translate(715.5,664.5) rotate(-41)" text-anchor="end" font-family="Liberation Mono" font-size="12" textLength="50.8" lengthAdjust="spacingAndGlyphs" fill="#5e5e5e" >2020-дек</text><text transform="translate(743.5,664.5) rotate(-41)" text-anchor="end" font-family="Liberation Mono" font-size="12" textLength="50.8" lengthAdjust="spacingAndGlyphs" fill="#5e5e5e" >2021-янв</text><text transform="translate(771.5,664.5) rotate(-41)" text-anchor="end" font-family="Liberation Mono" font-size="12" textLength="50.8" lengthAdjust="spacingAndGlyphs" fill="#5e5e5e" >2021-фев</text><text transform="translate(799.5,664.5) rotate(-41)" text-anchor="end" font-family="Liberation Mono" font-size="12" textLength="50.8" lengthAdjust="spacingAndGlyphs" fill="#5e5e5e" >2021-мар</text><text transform="translate(827.5,664.5) rotate(-41)" text-anchor="end" font-family="Liberation Mono" font-size="12" textLength="50.8" lengthAdjust="spacingAndGlyphs" fill="#5e5e5e" >2021-апр</text><text transform="translate(855.5,664.5) rotate(-41)" text-anchor="end" font-family="Liberation Mono" font-size="12" textLength="50.8" lengthAdjust="spacingAndGlyphs" fill="#5e5e5e" >2021-май</text><text transform="translate(883.5,664.5) rotate(-41)" text-anchor="end" font-family="Liberation Mono" font-size="12" textLength="50.8" lengthAdjust="spacingAndGlyphs" fill="#5e5e5e" >2021-июн</text><text transform="translate(911.5,664.5) rotate(-41)" text-anchor="end" font-family="Liberation Mono" font-size="12" textLength="50.8" lengthAdjust="spacingAndGlyphs" fill="#5e5e5e" >2021-июл</text><text transform="translate(28.8,610.8) rotate(-90)" text-anchor="middle" font-family='Liberation Sans' font-size="12.2" textLength="64.5" lengthAdjust="spacingAndGlyphs" fill="#4a4a4a">% текучести</text><path d="M23.3 560.7 L29.3 565 L23.3 569.3 Z" fill="#777"/><text transform="translate(996.8,581) rotate(90)" text-anchor="middle" font-family='Liberation Sans' font-size="12.2" textLength="69.5" lengthAdjust="spacingAndGlyphs" fill="#4a4a4a">Среднеспи...</text><path d="M1003.3 630.4 L997.3 634.7 L1003.3 639 Z" fill="#777"/><text x="465.4" y="735.2" font-family='Liberation Sans' font-size="12" textLength="57.6" lengthAdjust="spacingAndGlyphs" fill="#4a4a4a">Год-Месяц</text><path d="M533 728.6 L541.2 728.6 L537.1 734.1 Z" fill="#777"/></svg>
</body></html>
